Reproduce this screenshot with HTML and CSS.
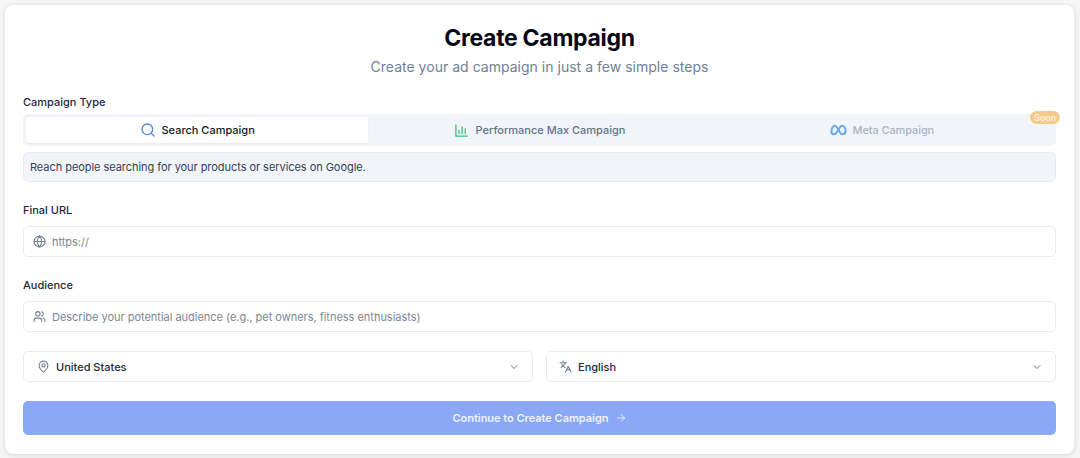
FILE: index.html
```html
<!DOCTYPE html>
<html lang="en">
<head>
<meta charset="utf-8">
<title>Create Campaign</title>
<link rel="stylesheet" href="styles.css">
</head>
<body>
<main class="card">
  <h1 class="title">Create Campaign</h1>
  <p class="subtitle">Create your ad campaign in just a few simple steps</p>

  <div class="label label-type">Campaign Type</div>
  <div class="tabs">
    <div class="tab tab-active">
      <svg class="ico-search" viewBox="0 0 24 24"><circle cx="11" cy="11" r="8"/><path d="m21 21-4.3-4.3"/></svg>
      <span>Search Campaign</span>
    </div>
    <div class="tab tab-perf">
      <svg class="ico-chart" viewBox="0 0 24 24"><path d="M3 3v18h18"/><path d="M8 17v-5"/><path d="M13 17V6"/><path d="M18 17v-8"/></svg>
      <span>Performance Max Campaign</span>
    </div>
    <div class="tab tab-meta">
      <svg class="ico-meta" viewBox="0 0 24 16"><path d="M2 10.500C2 6 4.300 2 7 2c3.500 0 6.500 12 10.500 12 2.700 0 4.500-2 4.500-4.500C22 5.500 19.800 2 17 2 13 2 10.500 14 6 14c-2.500 0-4-1.500-4-3.500z"/></svg>
      <span>Meta Campaign</span>
    </div>
    <span class="badge">Soon</span>
  </div>
  <div class="desc">Reach people searching for your products or services on Google.</div>

  <div class="label label-field">Final URL</div>
  <div class="field">
    <svg class="ico" viewBox="0 0 24 24"><circle cx="12" cy="12" r="10"/><path d="M12 2a14.500 14.500 0 0 0 0 20 14.500 14.500 0 0 0 0-20"/><path d="M2 12h20"/></svg>
    <span class="placeholder">https://</span>
  </div>

  <div class="label label-field">Audience</div>
  <div class="field">
    <svg class="ico" viewBox="0 0 24 24"><path d="M16 21v-2a4 4 0 0 0-4-4H6a4 4 0 0 0-4 4v2"/><circle cx="9" cy="7" r="4"/><path d="M22 21v-2a4 4 0 0 0-3-3.870"/><path d="M16 3.130a4 4 0 0 1 0 7.750"/></svg>
    <span class="placeholder">Describe your potential audience (e.g., pet owners, fitness enthusiasts)</span>
  </div>

  <div class="selects">
    <div class="select">
      <svg class="ico" viewBox="0 0 24 24"><path d="M20 10c0 5-5.500 10.200-7.400 11.800a1 1 0 0 1-1.200 0C9.500 20.200 4 15 4 10a8 8 0 0 1 16 0"/><circle cx="12" cy="10" r="3"/></svg>
      <span class="value">United States</span>
      <svg class="chev" viewBox="0 0 24 24"><path d="m6 9 6 6 6-6"/></svg>
    </div>
    <div class="select select-lang">
      <svg class="ico" viewBox="0 0 24 24"><path d="m5 8 6 6"/><path d="m4 14 6-6 2-3"/><path d="M2 5h12"/><path d="M7 2h1"/><path d="m22 22-5-10-5 10"/><path d="M14 18h6"/></svg>
      <span class="value">English</span>
      <svg class="chev" viewBox="0 0 24 24"><path d="m6 9 6 6 6-6"/></svg>
    </div>
  </div>

  <div class="button">
    <span>Continue to Create Campaign</span>
    <svg class="arrow" viewBox="0 0 24 24"><path d="M5 12h14"/><path d="m12 5 7 7-7 7"/></svg>
  </div>
</main>
</body>
</html>
```
FILE: styles.css
```css
* { box-sizing: border-box; }
html, body { margin: 0; height: 458px; overflow: hidden; }
body {
  background: #f5f5f6;
  padding: 5px 6px 4px 5px;
  font-family: Inter, "Liberation Sans", sans-serif;
  color: #0f172a;
}
.card {
  height: 449px;
  background: #fff;
  border-radius: 8px;
  box-shadow: 0 1px 4px rgba(15, 23, 42, .14);
  padding: 17px 18px 0;
}
svg { fill: none; stroke: currentColor; stroke-width: 2; stroke-linecap: round; stroke-linejoin: round; flex: none; }
.title {
  margin: 0;
  height: 32px;
  line-height: 32px;
  font-size: 23px;
  font-weight: 700;
  letter-spacing: -.3px;
  text-align: center;
  color: #020617;
}
.subtitle {
  margin: 1px 0 0;
  height: 24px;
  line-height: 24px;
  font-size: 14px;
  text-align: center;
  color: #718096;
  letter-spacing: .02px;
}
.label {
  font-size: 11px;
  line-height: 16px;
  font-weight: 450;
  color: #1e293b;
}
.label-type { margin-top: 15px; }
.label-field { margin-top: 20px; }
.tabs {
  position: relative;
  margin-top: 4px;
  height: 32px;
  padding: 3px;
  display: flex;
  background: #f1f5f9;
  border-radius: 5px;
}
.tab {
  flex: 1;
  display: flex;
  align-items: center;
  justify-content: center;
  gap: 6px;
  font-size: 11px;
  font-weight: 450;
  color: #64748b;
  border-radius: 3px;
}
.tab-active { background: #fff; color: #0f172a; box-shadow: 0 1px 2px rgba(15, 23, 42, .05); }
.tab-perf { gap: 7px; }
.tab-meta { color: #a9b4c4; }
.tab-meta span { letter-spacing: -.1px; }
.ico-search { width: 16px; height: 16px; color: #4f86dc; }
.ico-chart { width: 15px; height: 15px; color: #34c07a; }
.ico-meta { width: 17px; height: 12px; color: #6ea8ee; stroke-width: 3; }
.badge {
  position: absolute;
  top: -3px;
  right: -4px;
  height: 13px;
  line-height: 13px;
  padding: 0 4px;
  border-radius: 7px;
  background: #f5cb8b;
  color: #fdf5e6;
  font-size: 9px;
  font-weight: 500;
}
.desc {
  margin-top: 6px;
  height: 30px;
  padding: 0 6px;
  display: flex;
  align-items: center;
  background: #f1f5f9;
  border: 1px solid #e6ebf1;
  border-radius: 5px;
  font-size: 11px;
  letter-spacing: -.05px;
  color: #334155;
}
.field, .select {
  height: 31px;
  display: flex;
  align-items: center;
  background: #fff;
  border: 1px solid #e8ecf1;
  border-radius: 5px;
}
.field { margin-top: 8px; padding: 0 9px; gap: 6px; }
.ico { width: 13px; height: 13px; color: #727f91; }
.placeholder { font-size: 11px; letter-spacing: -.02px; color: #7a8798; }
.selects {
  margin-top: 19px;
  display: grid;
  grid-template-columns: 1fr 1fr;
  gap: 13px;
}
.select { padding: 0 13px; gap: 6px; }
.select-lang { padding-left: 12px; }
.value { flex: 1; font-size: 11px; font-weight: 450; color: #1e293b; }
.chev { width: 12px; height: 12px; color: #64748b; margin-right: -1px; }
.button {
  margin-top: 19px;
  height: 34px;
  display: flex;
  align-items: center;
  justify-content: center;
  gap: 6px;
  background: #8aa8f6;
  border-radius: 5px;
  color: #eef2fe;
  font-size: 11px;
  font-weight: 600;
  letter-spacing: -.02px;
}
.arrow { width: 12px; height: 12px; }
```
